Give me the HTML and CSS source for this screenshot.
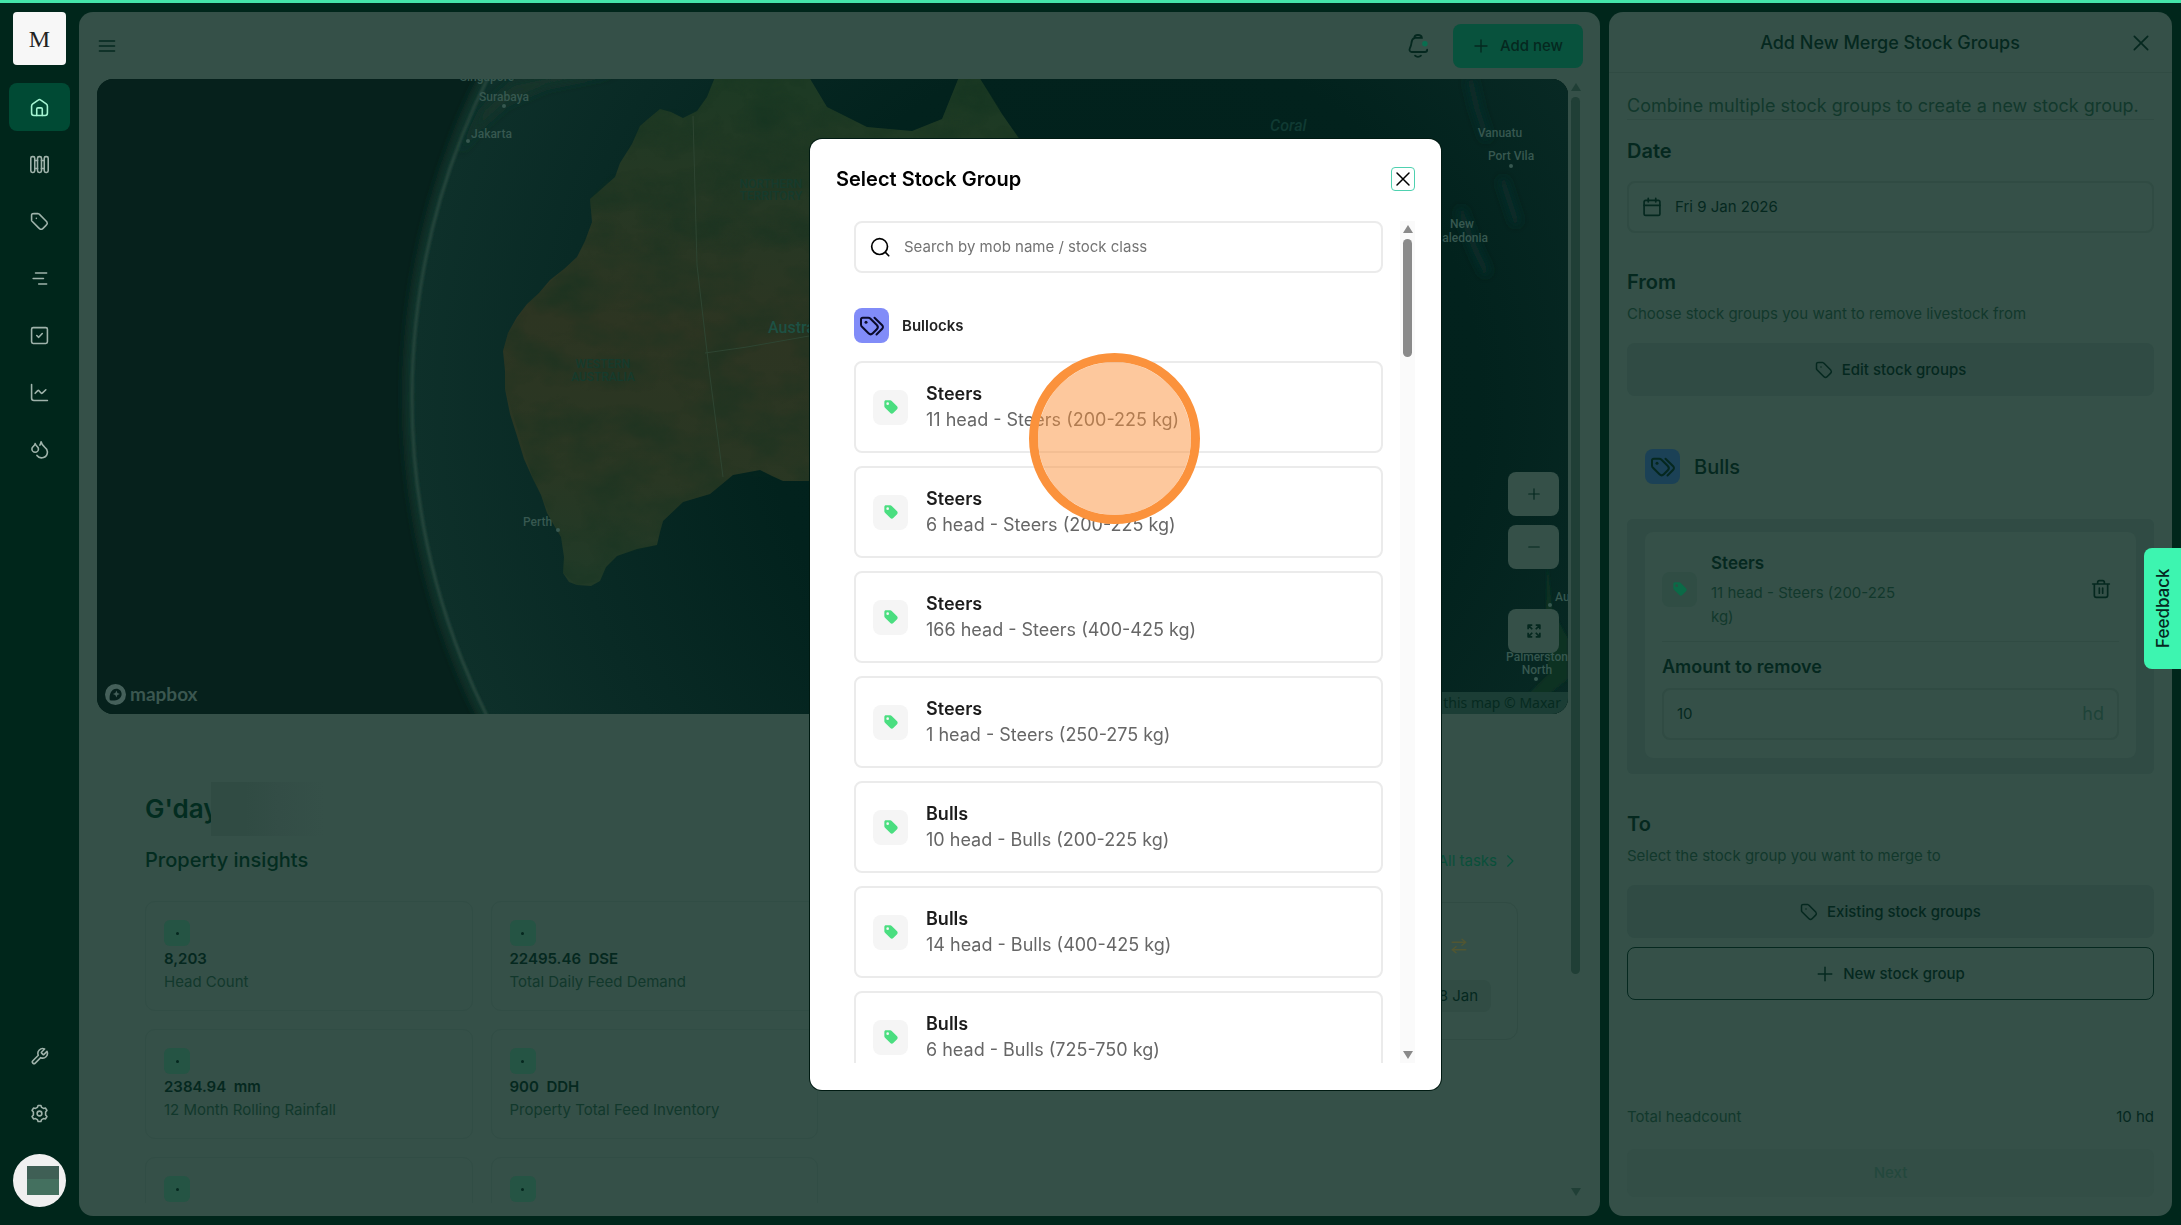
FILE: index.html
```html
<!DOCTYPE html>
<html lang="en">
<head>
<meta charset="utf-8">
<meta name="viewport" content="width=device-width, initial-scale=1">
<title>Merge Stock Groups</title>
<link rel="stylesheet" href="styles.css">
</head>
<body>
<svg width="0" height="0" class="defs" aria-hidden="true">
  <symbol id="tag" viewBox="0 0 24 24"><path d="M8 8h.01M2 5.2v4.5c0 .5 0 .7.06 1 .05.2.13.4.24.6.12.2.3.38.64.73l7.67 7.67c1.2 1.2 1.8 1.8 2.48 2 .6.2 1.25.2 1.85 0 .7-.2 1.3-.8 2.48-2l2.2-2.2c1.2-1.2 1.8-1.8 2-2.48.2-.6.2-1.25 0-1.85-.2-.7-.8-1.3-2-2.48l-7.65-7.65c-.35-.35-.52-.52-.72-.64-.2-.1-.4-.2-.6-.25C10.4 2 10.2 2 9.700 2H5.200c-1.100 0-1.700 0-2.100.2-.4.200-.7.500-.9.900C2 3.500 2 4.100 2 5.200z"/></symbol>
  <symbol id="tags" viewBox="0 0 26 24"><path d="M2 5.500v5c0 .9.300 1.700 1 2.300l6.500 6.500c1.300 1.300 3 1.300 4.300 0l4-4c1.300-1.300 1.300-3 0-4.300L11.500 4.700C10.800 4 10 3.800 9.200 3.800H3.700C2.700 3.800 2 4.500 2 5.500z"/><path d="M7 8.300h.01" stroke-width="3"/><path d="M15.500 3.800l7.700 7.500c1 1 1 2.500 0 3.500L17.500 20.500"/></symbol>
  <symbol id="tagfill" viewBox="0 0 24 24"><path fill-rule="evenodd" d="M2 4.500C2 3 3 2 4.500 2h6.300c.9 0 1.700.3 2.300 1l8 8c1.200 1.200 1.200 3.200 0 4.400l-5.700 5.700c-1.200 1.200-3.200 1.200-4.400 0l-8-8c-.7-.6-1-1.400-1-2.300zM7 9a2 2 0 1 0 0-4 2 2 0 0 0 0 4z"/></symbol>
  <symbol id="plus" viewBox="0 0 24 24"><path d="M12 3v18M3 12h18"/></symbol>
  <symbol id="x" viewBox="0 0 24 24"><path d="M4 4l16 16M20 4L4 20"/></symbol>
</svg>

<div class="progress"></div>
<div class="app">
  <nav class="sidebar" aria-label="Main">
    <a class="logo" href="#">M</a>
    <div class="nav-list">
      <a class="nav-item active" href="#" aria-label="Home"><svg class="icon" viewBox="0 0 24 24"><path d="M2 10.500c0-1.300.5-2.300 1.500-3L10.300 2.600c1-.8 2.400-.8 3.400 0l6.800 4.900c1 .7 1.500 1.700 1.500 3V19c0 1.700-1.300 3-3 3H5c-1.700 0-3-1.300-3-3z"/><path d="M8.500 22v-8c0-.8.700-1.500 1.500-1.500h4c.8 0 1.500.7 1.500 1.500v8"/></svg></a>
      <a class="nav-item" href="#" aria-label="Paddocks"><svg class="icon" viewBox="0 0 24 24"><rect x="1" y="2" width="5" height="20" rx="2"/><rect x="9.500" y="2" width="5" height="20" rx="2"/><rect x="18" y="2" width="5" height="20" rx="2"/><path d="M6 7h3.500M6 17h3.500M14.500 7H18M14.500 17H18"/></svg></a>
      <a class="nav-item" href="#" aria-label="Stock"><svg class="icon"><use href="#tag"/></svg></a>
      <a class="nav-item" href="#" aria-label="Timeline"><svg class="icon" viewBox="0 0 24 24"><path d="M7 5h14M4 12h13M11 19h10"/></svg></a>
      <a class="nav-item" href="#" aria-label="Tasks"><svg class="icon" viewBox="0 0 24 24"><rect x="2" y="2" width="20" height="20" rx="2"/><path d="M8.500 12l2.500 2.300L15.500 9.500"/></svg></a>
      <a class="nav-item" href="#" aria-label="Reports"><svg class="icon" viewBox="0 0 24 24"><path d="M2 2v17c0 1.800 1.200 3 3 3h17M6.500 13l3.300-3.300c.6-.5 1-.5 1.500 0l2.700 3c.5.500 1 .5 1.500 0L20 8.500"/></svg></a>
      <a class="nav-item" href="#" aria-label="Rainfall"><svg class="icon" viewBox="0 0 24 24"><path d="M6.500 15.500c2.300 0 4.200-1.900 4.200-4.200 0-1.200-.6-2.300-1.800-3.300S7 5.800 6.500 4.500C6.200 5.900 5.400 7.100 4.200 8.100c-1.200.9-1.800 2-1.800 3.200 0 2.300 1.900 4.200 4.100 4.200z"/><path d="M12.500 6.500c.7-1.300 1.200-2.700 1.500-4.300.6 2.600 2.200 5 4.500 6.800 2.300 1.700 3.500 4 3.500 6A7.300 7.300 0 0 1 8.800 19.500"/></svg></a>
    </div>
    <div class="nav-foot">
      <a class="nav-item" href="#" aria-label="Tools"><svg class="icon" viewBox="0 0 24 24"><path d="M14.700 6.300a1 1 0 0 0 0 1.400l1.600 1.600a1 1 0 0 0 1.400 0l3.770-3.770a6 6 0 0 1-7.940 7.940l-6.910 6.910a2.120 2.120 0 0 1-3-3l6.910-6.910a6 6 0 0 1 7.940-7.940l-3.760 3.760z"/></svg></a>
      <a class="nav-item" href="#" aria-label="Settings"><svg class="icon" viewBox="0 0 24 24"><circle cx="12" cy="12" r="3"/><path d="M9.300 4.300L10.200 1.800h3.600l.9 2.500 2.300 1.300 2.600-.5 1.800 3.100-1.700 2v3.600l1.700 2-1.800 3.100-2.600-.5-2.300 1.300-.9 2.500h-3.600l-.9-2.500-2.300-1.300-2.600.5-1.800-3.100 1.700-2v-3.600l-1.700-2 1.800-3.100 2.600.5z"/></svg></a>
      <a class="avatar" href="#" aria-label="Account"><span class="avatar-mask"></span></a>
    </div>
  </nav>

  <main class="panel main">
    <header class="topbar">
      <button class="plain" aria-label="Menu"><svg class="icon menu" viewBox="0 0 24 24"><path d="M3 6h18M3 12h18M3 18h18"/></svg></button>
      <div class="topbar-actions">
        <button class="plain" aria-label="Notifications"><svg class="bell" viewBox="0 0 24 28"><path d="M8 5C5.500 6.300 5 9 4.800 11c-.2 2.500-.8 3.700-1.700 5.500-.9 1.800-.1 4 1.900 4h14.500c1.500 0 2.500-1 2.500-2.500M8 5.500C8 3 9.500 2 12 2s4 1 4.200 3.200H8.500"/><path d="M8.800 24.500c1.700 1.600 4.700 1.600 6.400 0"/><circle class="bell-dot" cx="19.500" cy="11.500" r="2"/></svg></button>
        <button class="add-new"><svg class="icon add-icon"><use href="#plus"/></svg>Add new</button>
      </div>
    </header>

    <div class="main-scroll">
      <div class="main-content">
        <section class="map" aria-label="Map">
          <svg class="map-art" viewBox="0 0 1471 635" preserveAspectRatio="xMidYMid slice">
            <defs>
              <radialGradient id="sea" gradientUnits="userSpaceOnUse" cx="1027" cy="319" r="712">
                <stop offset="0" stop-color="#01201b"/><stop offset=".5" stop-color="#02221d"/><stop offset=".8" stop-color="#092a25"/><stop offset="1" stop-color="#0e302a"/>
              </radialGradient>
              <linearGradient id="land" gradientUnits="userSpaceOnUse" x1="600" y1="0" x2="540" y2="500">
                <stop offset="0" stop-color="#1d3a24"/><stop offset=".25" stop-color="#263824"/><stop offset=".5" stop-color="#2d3522"/><stop offset=".8" stop-color="#293723"/><stop offset="1" stop-color="#213a27"/>
              </linearGradient>
              <filter id="grain" x="0" y="0" width="100%" height="100%" color-interpolation-filters="sRGB"><feTurbulence type="fractalNoise" baseFrequency=".02 .03" numOctaves="5" seed="8"/><feColorMatrix values="0 0 0 0 .06  0 0 0 0 .19  0 0 0 0 .12  1.400 0 0 0 -.5"/><feComposite in2="SourceGraphic" operator="in"/></filter>
              <filter id="soft" x="-20%" y="-20%" width="140%" height="140%"><feGaussianBlur stdDeviation="5"/></filter>
              <filter id="soft2" x="-20%" y="-20%" width="140%" height="140%"><feGaussianBlur stdDeviation="1"/></filter>
            </defs>
            <rect width="1471" height="635" fill="#06211c"/>
            <circle cx="1027" cy="319" r="714" fill="none" stroke="#16382f" stroke-width="10" filter="url(#soft)"/>
            <circle cx="1027" cy="319" r="711" fill="url(#sea)"/>
            <circle cx="1027" cy="319" r="712" fill="none" stroke="#26463d" stroke-width="3" filter="url(#soft2)"/>
            <path d="M362 76L382 50 410 25 450 8 520-6 470-8 415 4 385 30z" fill="#12352a" filter="url(#soft)"/>
            <path fill="url(#land)" d="M618-2L610 18 600 32 586 39 574 33 563 30 551 40 543 47 535 65 523 84 518 98 510 105 500 114 493 120 495 143 488 162 480 178 467 190 453 201 442 214 430 225 420 238 411 254 406 272 408 292 408 310 413 335 420 357 427 380 436 400 444 416 450 434 458 448 464 458 467 478 466 494 472 503 480 506 494 507 503 502 509 488 520 477 540 470 560 466 563 453 566 442 586 423 613 415 636 396 663 391 675 397 686 402 712 402 850 430 950 520 1000 300 950 100 905 35 882-2 862-2 845 40 815 52 770 48 730 28 712-2z"/>
            <path fill="#000" filter="url(#grain)" opacity=".6" d="M618-2L600 32 563 30 543 47 523 84 493 120 495 143 480 178 430 225 411 254 406 272 408 310 436 400 464 458 466 494 480 506 503 502 520 477 560 466 566 442 586 423 613 415 636 396 712 402 950 400 950 100 882-2 862-2 845 40 815 52 770 48 730 28 712-2z"/>
            <path d="M596 37L600 186 612 290 626 398M608 274L650 268 712 257" fill="none" stroke="#2e4532" stroke-width="1"/>
            <path d="M1373 0L1380 30 1390 60M1363 130L1378 170 1390 195M1405 100L1420 145" fill="none" stroke="#072d29" stroke-width="8" filter="url(#soft)"/>
            <path d="M1450 480L1455 530 1471 560V600L1440 625 1428 618 1452 595 1449 550zM1380 640L1388 618 1410 628z" fill="#0c3324" filter="url(#soft2)"/>
            <g class="map-labels">
              <text x="390" y="2" text-anchor="middle">Singapore</text>
              <text x="407" y="22" text-anchor="middle">Surabaya</text><circle cx="407" cy="27" r="2"/>
              <text x="374" y="59">Jakarta</text><circle cx="371" cy="62" r="2"/>
              <text x="426" y="447">Perth</text><circle cx="461" cy="451" r="2"/>
              <g class="state"><text x="674" y="109" text-anchor="middle">NORTHERN</text><text x="674" y="121" text-anchor="middle">TERRITORY</text>
              <text x="506" y="289" text-anchor="middle">WESTERN</text><text x="506" y="302" text-anchor="middle">AUSTRALIA</text></g>
              <text class="country" x="671" y="254">Australia</text>
              <text class="ocean" x="1173" y="52">Coral</text>
              <text x="1403" y="58" text-anchor="middle">Vanuatu</text>
              <text x="1414" y="81" text-anchor="middle">Port Vila</text><circle cx="1414" cy="87" r="2"/>
              <text x="1365" y="149" text-anchor="middle">New</text><text x="1391" y="163" text-anchor="end">Caledonia</text>
              <text x="1458" y="522">Auckland</text><circle cx="1453" cy="526" r="2"/>
              <text x="1440" y="582" text-anchor="middle">Palmerston</text><text x="1440" y="595" text-anchor="middle">North</text><circle cx="1439" cy="600" r="2"/>
            </g>
          </svg>
          <a class="mapbox" href="#"><svg viewBox="0 0 24 24" width="21" height="21"><path fill="#45605a" fill-rule="evenodd" d="M12 0a12 12 0 1 0 0 24 12 12 0 0 0 0-24zM5.500 18.500C4.500 12 7 5.500 13 5.300c3.500 0 6 2.600 6 6 0 6-7 8.500-13.500 7.200zM13 7.500l1.200 2.800L17 11.500l-2.800 1.200L13 15.500l-1.200-2.800L9 11.500l2.800-1.200z"/></svg>mapbox</a>
          <div class="map-controls">
            <button aria-label="Zoom in"><svg class="icon map-icon"><use href="#plus"/></svg></button>
            <button aria-label="Zoom out"><svg class="icon map-icon" viewBox="0 0 24 24"><path d="M3 12h18"/></svg></button>
            <button class="fit" aria-label="Fit to screen"><svg class="icon map-icon expand" viewBox="0 0 24 24"><path d="M2 9V2h7M2 2l7 7M15 2h7v7M22 2l-7 7M2 15v7h7M2 22l7-7M22 15v7h-7M22 22l-7-7"/></svg></button>
          </div>
          <div class="attribution"><a href="#">Improve this map</a> <a href="#">© Maxar</a></div>
        </section>

        <section class="home">
          <h1>G'day<span class="name-mask"></span></h1>
          <div class="home-cols">
            <div>
              <h2>Property insights</h2>
              <div class="stats">
                <article class="stat"><span class="chip"></span><b>8,203</b><p>Head Count</p></article>
                <article class="stat"><span class="chip"></span><b>22495.46&nbsp; DSE</b><p>Total Daily Feed Demand</p></article>
                <article class="stat"><span class="chip"></span><b>2384.94&nbsp; mm</b><p>12 Month Rolling Rainfall</p></article>
                <article class="stat"><span class="chip"></span><b>900&nbsp; DDH</b><p>Property Total Feed Inventory</p></article>
                <article class="stat"><span class="chip"></span></article>
                <article class="stat"><span class="chip"></span></article>
              </div>
            </div>
            <div>
              <div class="tasks-head"><a href="#">All tasks <svg class="icon chev" viewBox="0 0 24 24"><path d="M8 3l9 9-9 9"/></svg></a></div>
              <article class="task">
                <svg class="icon swap" viewBox="0 0 24 24"><path d="M3 7h18l-5-4M21 17H3l5 4M16 11l5-4M8 13l-5 4"/></svg>
                <span class="date-chip">08 Jan</span>
              </article>
            </div>
          </div>
        </section>
      </div>
      <div class="scrollbar dim" aria-hidden="true"><i class="up"></i><i class="thumb"></i><i class="down"></i></div>
    </div>
  </main>

  <aside class="panel side">
    <header class="side-head"><h2>Add New Merge Stock Groups</h2><button class="plain" aria-label="Close panel"><svg class="icon"><use href="#x"/></svg></button></header>
    <div class="side-body">
      <p class="intro">Combine multiple stock groups to create a new stock group.</p>
      <label class="h3" for="date">Date</label>
      <div class="field"><svg class="icon" viewBox="0 0 24 24"><rect x="2.500" y="4" width="19" height="18" rx="2"/><path d="M2.500 10h19M7.500 1.500V6M16.500 1.500V6"/></svg><input id="date" value="Fri 9 Jan 2026"></div>
      <h3>From</h3>
      <p class="hint">Choose stock groups you want to remove livestock from</p>
      <button class="btn soft"><svg class="icon"><use href="#tag"/></svg>Edit stock groups</button>
      <div class="group"><span class="group-icon blue"><svg><use href="#tags"/></svg></span>Bulls</div>
      <div class="well">
        <div class="well-card">
          <div class="picked">
            <span class="tag-box dim-box"><svg><use href="#tagfill"/></svg></span>
            <div class="picked-text"><b>Steers</b><p>11 head - Steers (200-225 kg)</p></div>
            <button class="plain" aria-label="Remove"><svg class="icon trash" viewBox="0 0 24 24"><path d="M2 6h20M8 6V4c0-1.200.8-2 2-2h4c1.200 0 2 .8 2 2v2M4 6v13.500c0 1.500 1 2.500 2.500 2.500h11c1.500 0 2.500-1 2.500-2.500V6M10 11v6M14 11v6"/></svg></button>
          </div>
          <label class="amount" for="amount">Amount to remove</label>
          <div class="field small"><input id="amount" value="10"><span>hd</span></div>
        </div>
      </div>
      <h3>To</h3>
      <p class="hint">Select the stock group you want to merge to</p>
      <button class="btn soft"><svg class="icon"><use href="#tag"/></svg>Existing stock groups</button>
      <button class="btn outline"><svg class="icon"><use href="#plus"/></svg>New stock group</button>
    </div>
    <footer class="side-foot">
      <div class="total"><span>Total headcount</span><span class="total-num">10 hd</span></div>
      <button class="btn next" disabled>Next</button>
    </footer>
  </aside>
</div>

<button class="feedback">Feedback</button>

<div class="overlay">
  <div class="modal" role="dialog" aria-modal="true" aria-labelledby="modal-title">
    <header class="modal-head"><h2 id="modal-title">Select Stock Group</h2><button class="modal-close" aria-label="Close"><svg class="icon"><use href="#x"/></svg></button></header>
    <div class="modal-body">
      <div class="modal-list">
        <div class="search"><svg class="icon" viewBox="0 0 24 24"><circle cx="11.500" cy="11.500" r="9.500"/><path d="M18.500 18.500L22.500 22.500"/></svg><input type="text" placeholder="Search by mob name / stock class" aria-label="Search by mob name / stock class"></div>
        <div class="modal-group"><span class="group-icon"><svg><use href="#tags"/></svg></span>Bullocks</div>
        <div class="options">
          <button class="option"><span class="tag-box"><svg><use href="#tagfill"/></svg></span><span class="option-text"><b>Steers</b><span>11 head - Steers (200-225 kg)</span></span></button>
          <button class="option"><span class="tag-box"><svg><use href="#tagfill"/></svg></span><span class="option-text"><b>Steers</b><span>6 head - Steers (200-225 kg)</span></span></button>
          <button class="option"><span class="tag-box"><svg><use href="#tagfill"/></svg></span><span class="option-text"><b>Steers</b><span>166 head - Steers (400-425 kg)</span></span></button>
          <button class="option"><span class="tag-box"><svg><use href="#tagfill"/></svg></span><span class="option-text"><b>Steers</b><span>1 head - Steers (250-275 kg)</span></span></button>
          <button class="option"><span class="tag-box"><svg><use href="#tagfill"/></svg></span><span class="option-text"><b>Bulls</b><span>10 head - Bulls (200-225 kg)</span></span></button>
          <button class="option"><span class="tag-box"><svg><use href="#tagfill"/></svg></span><span class="option-text"><b>Bulls</b><span>14 head - Bulls (400-425 kg)</span></span></button>
          <button class="option"><span class="tag-box"><svg><use href="#tagfill"/></svg></span><span class="option-text"><b>Bulls</b><span>6 head - Bulls (725-750 kg)</span></span></button>
        </div>
      </div>
      <div class="scrollbar" aria-hidden="true"><i class="up"></i><i class="thumb"></i><i class="down"></i></div>
    </div>
    <span class="click-ring" aria-hidden="true"></span>
  </div>
</div>
</body>
</html>
```
FILE: styles.css
```css
:root {
  --bg: #00261b;
  --panel: #355048;
  --ink: #05281f;
  --muted: #12382c;
  --line: #304b43;
  --soft: #304b44;
}
* { box-sizing: border-box; }
body {
  margin: 0;
  height: 100vh;
  overflow: hidden;
  background: var(--bg);
  color: var(--ink);
  font: 15px/20px Inter, "Liberation Sans", sans-serif;
}
h1, h2, h3, p { margin: 0; }
a { color: inherit; text-decoration: none; }
button, input { font: inherit; color: inherit; }
button { cursor: pointer; }
input { min-width: 0; flex: 1; border: 0; padding: 0; background: none; outline: none; }
b { font-weight: 600; }
.defs { position: absolute; }
.icon { width: 20px; height: 20px; flex: none; fill: none; stroke: currentColor; stroke-width: 2; stroke-linecap: round; stroke-linejoin: round; display: block; }
.plain { border: 0; padding: 0; background: none; display: flex; }

.progress { position: fixed; inset: 0 0 auto; height: 3px; background: #45e5aa; }
.app { display: flex; gap: 9px; height: 100vh; padding: 12px 9px 9px 0; }
.panel { background: var(--panel); border-radius: 14px; min-height: 0; }

/* Sidebar */
.sidebar { width: 70px; flex: none; display: flex; flex-direction: column; align-items: flex-end; color: #9fb3ab; }
.logo { width: 53px; height: 53px; margin-right: 4px; flex: none; display: grid; place-items: center; background: #f7f7f7; border-radius: 4px; color: #222; font: 24px/1 "Liberation Serif", serif; }
.nav-list { display: grid; gap: 9px; margin-top: 18px; }
.nav-item { width: 61px; height: 48px; display: grid; place-items: center; border-radius: 8px; }
.nav-item .icon { width: 19px; height: 19px; }
.nav-item.active { background: #004a34; color: #a5f5d3; }
.nav-foot { display: grid; gap: 9px; margin-top: auto; padding-bottom: 9px; }
.avatar { width: 53px; height: 53px; margin: 8px 0 0 4px; border-radius: 50%; background: #f0f0f0; display: grid; place-items: center; }
.avatar-mask { width: 32px; height: 29px; margin-left: 6px; background: linear-gradient(#3f5f55 45%, #44705f 45%); }

/* Main panel */
.main { flex: 1; min-width: 0; display: flex; flex-direction: column; padding: 0 20px 13px 18px; overflow: hidden; }
.topbar { display: flex; justify-content: space-between; align-items: center; height: 67px; margin-right: -3px; flex: none; }
.menu { width: 20px; height: 20px; }
.topbar-actions { display: flex; align-items: center; gap: 24px; }
.bell { width: 22px; height: 26px; fill: none; stroke: currentColor; stroke-width: 2; stroke-linecap: round; }
.bell .bell-dot { fill: #0a6e50; stroke: #0a6e50; }
.add-new { display: flex; align-items: center; gap: 11px; height: 44px; padding: 0 20px; border: 0; border-radius: 8px; background: #08523d; font-weight: 500; }
.add-icon { width: 16px; height: 16px; }
.main-scroll { flex: 1; min-height: 0; display: flex; gap: 3px; }
.main-content { flex: 1; min-width: 0; overflow: hidden; }
.map { position: relative; height: 635px; border-radius: 16px; overflow: hidden; background: #06211c; }
.map-art { width: 100%; height: 100%; display: block; }
.map-labels { font: 500 12px Roboto, sans-serif; fill: #375850; }
.map-labels .state { fill: #153b2d; }
.map-labels .country { font-size: 16px; fill: #1d5144; }
.map-labels .ocean { font-size: 16px; font-style: italic; fill: #103a33; }
.mapbox { position: absolute; left: 8px; bottom: 6px; display: flex; align-items: center; gap: 4px; color: #3b5750; font: 700 19px/28px Lato, sans-serif; }
.map-controls { position: absolute; right: 9px; bottom: 61px; display: grid; gap: 9px; }
.map-controls button { width: 51px; height: 44px; border: 0; border-radius: 8px; background: var(--panel); display: grid; place-items: center; }
.map-controls .fit { margin-top: 31px; }
.map-icon { width: 14px; height: 14px; }
.expand { stroke-width: 3; stroke-linecap: butt; }
.attribution { position: absolute; right: 0; bottom: 0; padding: 1px 7px; background: #1b3d35; color: #062a20; font: 14px/20px "Noto Sans", sans-serif; }

.home { padding: 76px 50px 0 48px; }
.home h1 { display: flex; align-items: center; height: 38px; font-size: 26px; line-height: 38px; font-weight: 600; color: #032c20; }
.name-mask { width: 113px; height: 54px; margin-left: -8px; background: linear-gradient(90deg, #304b43 30%, #334d46 60%, #355048); }
.home h2 { font-size: 20px; line-height: 28px; font-weight: 500; color: #032c20; }
.home-cols { display: grid; grid-template-columns: 1fr 1fr; gap: 27px; margin-top: 18px; }
.stats { display: grid; grid-template-columns: 1fr 1fr; gap: 18px; margin-top: 27px; }
.stat { height: 110px; padding: 18px; border: 1px solid #314d45; border-radius: 10px; }
.stat b { display: block; margin-top: 1px; line-height: 24px; }
.stat p { color: var(--muted); line-height: 22px; }
.chip { display: grid; place-items: center; width: 26px; height: 26px; border-radius: 6px; background: #255444; }
.chip::after { content: ""; width: 3px; height: 3px; border-radius: 50%; background: #05281f; }
.tasks-head { display: flex; justify-content: flex-end; height: 30px; align-items: center; color: #0a4f3a; padding-right: 1px; }
.tasks-head a { display: flex; align-items: center; gap: 6px; }
.chev { width: 14px; height: 14px; }
.task { height: 138px; margin-top: 26px; padding: 34px 26px 27px; border: 1px solid var(--line); border-radius: 12px; display: flex; flex-direction: column; align-items: flex-end; justify-content: space-between; }
.swap { width: 18px; height: 18px; margin-right: 23px; color: #515632; }
.date-chip { padding: 6px 13px; border-radius: 8px; background: #314c44; }

/* Scrollbars */
.scrollbar { width: 15px; flex: none; display: flex; flex-direction: column; align-items: center; background: #fafafa; }
.scrollbar .up, .scrollbar .down { border: 5px solid transparent; border-top-width: 0; border-bottom: 8px solid #8a8a8a; }
.scrollbar .up { margin: 4px 0 6px; }
.scrollbar .down { margin: auto 0 4px; transform: rotate(180deg); }
.scrollbar .thumb { width: 9px; height: 118px; border-radius: 5px; background: #8a8a8a; }
.scrollbar.dim { width: 9px; background: none; }
.dim .thumb { height: 78%; background: #203f36; }
.dim .up, .dim .down { border-bottom-color: #203f36; }
.scrollbar.dim .down { margin-bottom: 7px; }

/* Side panel */
.side { width: 563px; flex: none; display: flex; flex-direction: column; }
.side-head { flex: none; height: 61px; padding: 2px 21px 0 40px; display: flex; align-items: center; border-bottom: 1px solid var(--line); }
.side-head h2 { flex: 1; text-align: center; font-size: 18px; line-height: 24px; font-weight: 500; }
.side-body { flex: 1; min-height: 0; padding: 20px 18px 0; overflow: hidden; }
.intro { font-size: 18px; line-height: 26px; color: var(--muted); border-bottom: 1px solid var(--line); }
.side h3, .h3 { display: block; font-size: 20px; line-height: 28px; font-weight: 600; }
.h3 { margin: 17px 0 16px; }
.field { display: flex; align-items: center; gap: 13px; height: 52px; padding: 0 13px; border: 2px solid var(--line); border-radius: 8px; }
.side h3 { margin-top: 35px; }
.hint { margin: 8px 0 19px; color: var(--muted); }
.btn { width: 100%; height: 53px; display: flex; align-items: center; justify-content: center; gap: 9px; border: 0; border-radius: 8px; background: none; font-weight: 500; }
.btn .icon { width: 18px; height: 18px; }
.soft { background: var(--soft); }
.group { display: flex; align-items: center; gap: 14px; margin: 53px 18px 35px; font-size: 20px; font-weight: 500; }
.group-icon { width: 35px; height: 35px; border-radius: 8px; background: #818cf8; color: #0b0b2a; display: grid; place-items: center; }
.group-icon svg { width: 26px; height: 24px; fill: none; stroke: currentColor; stroke-width: 2; stroke-linecap: round; stroke-linejoin: round; }
.blue { background: #1b4156; color: #05281f; }
.well { padding: 13px 18px 16px; background: #304b44; border-radius: 6px; }
.well-card { padding: 17px 17px 18px; background: var(--panel); border-radius: 8px; }
.picked { display: flex; align-items: center; gap: 14px; padding-bottom: 12px; border-bottom: 1px solid var(--line); }
.picked-text { flex: 1; }
.picked-text b { font-size: 17px; line-height: 28px; }
.picked-text p { max-width: 200px; line-height: 24px; color: var(--muted); margin-top: 4px; }
.picked .plain { margin-right: 8px; }
.tag-box { flex: none; width: 35px; height: 35px; border-radius: 8px; background: #f5f5f5; display: grid; place-items: center; }
.tag-box svg { width: 16px; height: 16px; fill: #4ade80; }
.dim-box { background: #304d44; }
.dim-box svg { fill: #0b6a47; }
.amount { display: block; margin: 12px 0 8px; font-size: 18px; line-height: 26px; font-weight: 600; }
.small span { font-size: 18px; color: #1e4338; }
.well + h3 { margin-top: 36px; }
.outline { margin-top: 9px; border: 1px solid #05281f; }
.side-foot { padding: 0 18px 19px; }
.total { display: flex; justify-content: space-between; line-height: 24px; margin-bottom: 20px; color: var(--muted); }
.total-num { color: var(--ink); }
.next { height: 48px; color: #23483d; background: #334e46; }

.feedback { position: fixed; right: 0; top: 548px; width: 37px; height: 121px; padding: 0; border: 0; border-radius: 0 8px 8px 0; background: #3df5b0; color: #05281f; font-size: 17px; font-weight: 500; writing-mode: vertical-rl; transform: rotate(180deg); }

/* Dialog */
.overlay { position: fixed; inset: 3px 0 0; padding: 136px 0 135px 70px; display: flex; justify-content: center; }
.modal { position: relative; width: 631px; background: #fff; border-radius: 12px; box-shadow: 0 0 0 1px #001a12; color: #000; display: flex; flex-direction: column; padding: 26px 26px 27px; }
.modal-head { display: flex; justify-content: space-between; align-items: center; }
.modal-head h2 { font-size: 20px; line-height: 28px; font-weight: 600; }
.modal-close { width: 24px; height: 24px; display: grid; place-items: center; padding: 0; border: 1px solid #4fd1b0; border-radius: 4px; background: #fff; }
.modal-close .icon { width: 18px; height: 18px; }
.modal-body { flex: 1; min-height: 0; display: flex; gap: 17px; margin-top: 28px; padding-left: 18px; }
.modal-list { flex: 1; overflow: hidden; }
.search { display: flex; align-items: center; gap: 14px; height: 52px; padding: 0 14px; border: 2px solid #ebebeb; border-radius: 8px; }
.search input::placeholder { color: #737373; opacity: 1; }
.modal-group { display: flex; align-items: center; gap: 13px; margin: 35px 0 18px; font-weight: 600; color: #222; }
.options { display: grid; gap: 13px; }
.option { height: 92px; display: flex; align-items: center; gap: 18px; padding: 0 17px; border: 2px solid #ebebeb; border-radius: 8px; background: #fff; text-align: left; font-size: 18px; line-height: 26px; }
.option-text { display: flex; flex-direction: column; color: #666; }
.option b { color: #1c1c1c; }
.click-ring { position: absolute; left: 219px; top: 214px; width: 171px; height: 171px; border: 9px solid #fb923c; border-radius: 50%; background: rgba(251, 146, 60, .5); background-clip: padding-box; }
```
